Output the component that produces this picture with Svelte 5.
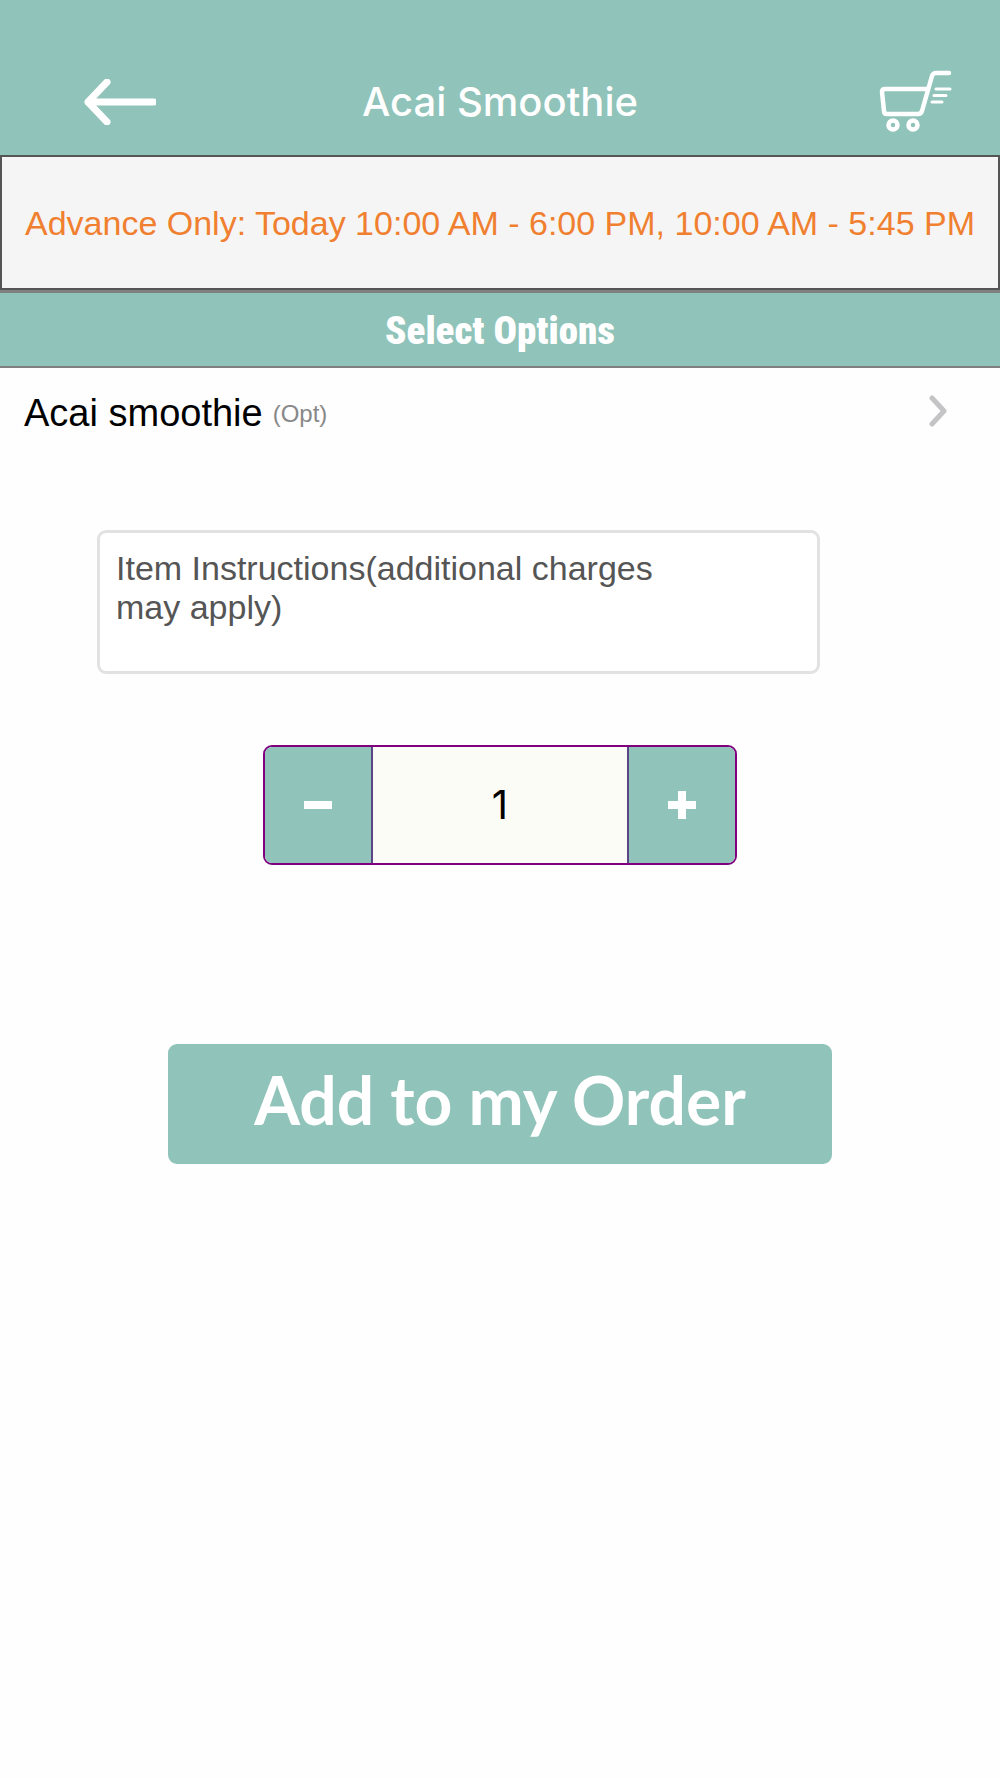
<script>
  let quantity = $state(1);
  let instructions = $state('');
</script>

<header class="topbar">
  <button class="icon-button" type="button" aria-label="Back">
    <svg width="74" height="46" viewBox="0 0 74 46" aria-hidden="true">
      <path d="M25 3 L6 23 L25 43 M6 23 H72" fill="none" stroke="#fff" stroke-width="7" stroke-linecap="round" stroke-linejoin="round" />
    </svg>
  </button>
  <h1>Acai Smoothie</h1>
  <button class="icon-button" type="button" aria-label="Cart">
    <svg width="74" height="66" viewBox="0 0 74 66" aria-hidden="true">
      <g fill="none" stroke="#fff" stroke-linecap="round" stroke-linejoin="round">
        <path d="M70 4 H57 Q54 4 53 7 L43 42 Q42 45 39 45 H8 Q5 45 5 42 L3 23 Q3 20 6 20 H49" stroke-width="4.500" />
        <path d="M57 20 H71 M55 26.500 H67 M53 33 H63" stroke-width="3" />
        <circle cx="14" cy="56" r="4.500" stroke-width="4.500" />
        <circle cx="34" cy="56" r="4.500" stroke-width="4.500" />
      </g>
    </svg>
  </button>
</header>

<main>
  <p class="notice">Advance Only: Today 10:00 AM - 6:00 PM, 10:00 AM - 5:45 PM</p>
  <h2>Select Options</h2>

  <button class="option" type="button">
    <span class="option-name">Acai smoothie <small>(Opt)</small></span>
    <svg width="22" height="32" viewBox="0 0 22 32" aria-hidden="true">
      <path d="M4 3 L16 16 L4 29" fill="none" stroke="#c4c4c6" stroke-width="5" stroke-linecap="round" stroke-linejoin="round" />
    </svg>
  </button>

  <form class="order" onsubmit={(e) => e.preventDefault()}>
    <textarea bind:value={instructions} aria-label="Item instructions" placeholder="Item Instructions(additional charges may apply)"></textarea>

    <div class="stepper">
      <button type="button" aria-label="Decrease quantity" onclick={() => (quantity = Math.max(1, quantity - 1))}>
        <svg width="28" height="28" viewBox="0 0 28 28" aria-hidden="true"><path d="M0 14 H28" stroke="#fff" stroke-width="8" /></svg>
      </button>
      <input type="text" inputmode="numeric" aria-label="Quantity" bind:value={quantity} />
      <button type="button" aria-label="Increase quantity" onclick={() => (quantity = Number(quantity) + 1)}>
        <svg width="28" height="28" viewBox="0 0 28 28" aria-hidden="true"><path d="M0 14 H28 M14 0 V28" stroke="#fff" stroke-width="8" /></svg>
      </button>
    </div>

    <button class="add" type="submit">Add to my Order</button>
  </form>
</main>

<style>
  :global(body) {
    background: #fefefe;
    font-family: "Liberation Sans", Arial, sans-serif;
  }

  button,
  input,
  textarea {
    box-sizing: border-box;
    margin: 0;
    padding: 0;
    border: 0;
    font-family: inherit;
  }

  button {
    cursor: pointer;
  }

  .topbar {
    display: grid;
    grid-template-columns: 1fr auto 1fr;
    align-items: center;
    padding: 69px 0 20px;
    background: #90c3b9;
  }

  .icon-button {
    display: flex;
    align-items: center;
    background: none;
  }

  .icon-button:first-child {
    justify-self: start;
    margin-left: 82px;
  }

  .icon-button:last-child {
    justify-self: end;
    margin-right: 47px;
  }

  h1 {
    margin: 0;
    color: #fff;
    font: 500 40px/48px Inter, sans-serif;
    text-align: center;
  }

  .notice {
    margin: 0;
    padding: 46px 8px 45px;
    border: 2px solid #555;
    background: #f5f5f5;
    color: #f08030;
    font-size: 34px;
    line-height: 40px;
    text-align: center;
  }

  h2 {
    margin: 0;
    padding: 17px 16px 14px;
    border: solid #808080;
    border-width: 3px 0 2px;
    background: #90c3b9;
    color: #fff;
    font: 900 39px/42px "Roboto Condensed", "Liberation Sans Narrow", "Liberation Sans", sans-serif;
    text-align: center;
  }

  .option {
    display: flex;
    align-items: center;
    justify-content: space-between;
    width: 100%;
    height: 88px;
    padding: 0 50px 2px 24px;
    background: none;
    color: #000;
    text-align: left;
  }

  .option-name {
    display: flex;
    align-items: center;
    gap: 10px;
    padding-top: 4px;
    font-size: 38px;
    line-height: 44px;
  }

  small {
    padding-top: 2px;
    color: #888;
    font-size: 24px;
  }

  .order {
    display: flex;
    flex-direction: column;
    align-items: center;
    padding: 74px 0 64px;
  }

  textarea {
    align-self: stretch;
    height: 144px;
    margin: 0 18% 71px 97px;
    padding: 16px 150px 16px 16px;
    border: 3px solid #e2e2e2;
    border-radius: 9px;
    outline: 0;
    background: #fff;
    color: #555;
    font-size: 34px;
    line-height: 39px;
    resize: none;
  }

  textarea::placeholder {
    color: #555;
    opacity: 1;
  }

  .stepper {
    display: flex;
    box-sizing: border-box;
    width: 474px;
    height: 120px;
    margin-bottom: 179px;
    overflow: hidden;
    border: 2px solid #800080;
    border-radius: 9px;
  }

  .stepper button {
    display: flex;
    flex: 0 0 106px;
    align-items: center;
    justify-content: center;
    background: #90c3b9;
  }

  .stepper input {
    flex: 1;
    min-width: 0;
    border: solid #5a4586;
    border-width: 0 2px;
    border-radius: 0;
    outline: 0;
    background: #fbfcf6;
    color: #000;
    font: 400 40px/48px Inter, sans-serif;
    text-align: center;
  }

  .add {
    width: 664px;
    max-width: 100%;
    padding: 19px 0 27px;
    border-radius: 9px;
    background: #90c3b9;
    color: #fff;
    font: 700 66px/74px Lato, sans-serif;
  }
</style>
